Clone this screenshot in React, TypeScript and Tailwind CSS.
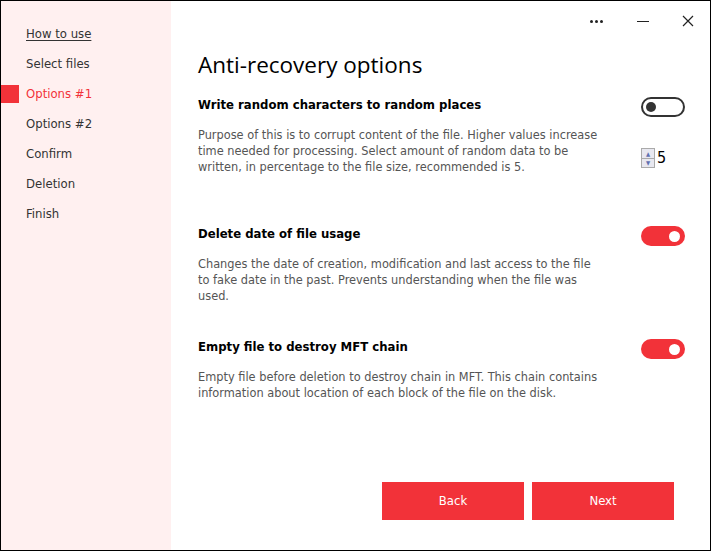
import { useState } from "react";

const navItems = ["How to use", "Select files", "Options #1", "Options #2", "Confirm", "Deletion", "Finish"];

function Toggle({ on }: { on: boolean }) {
  if (on) {
    return (
      <div className="flex h-[20px] w-[44px] items-center justify-end rounded-full bg-[#f23239] pr-[5px]">
        <div className="h-[11px] w-[11px] rounded-full bg-white" />
      </div>
    );
  }
  return (
    <div className="flex h-[20px] w-[44px] items-center rounded-full border-2 border-[#333] pl-[3px]">
      <div className="h-[10px] w-[10px] rounded-full bg-[#333]" />
    </div>
  );
}

function Option({
  title,
  text,
  on,
  extra,
  className,
}: {
  title: string;
  text: string;
  on: boolean;
  extra?: React.ReactNode;
  className?: string;
}) {
  return (
    <div className={`flex ${className ?? ""}`}>
      <div className="w-[405px]">
        <p className="text-[13px] font-bold leading-[16px] text-black">{title}</p>
        <p className="mt-[14px] text-[12.65px] leading-[16px] text-[#555]">{text}</p>
      </div>
      <div className="ml-[38px] flex flex-col">
        <Toggle on={on} />
        {extra}
      </div>
    </div>
  );
}

export default function App() {
  const [active] = useState(2);
  return (
    <div
      className="flex h-[551px] w-[711px] border border-black bg-white"
      style={{ fontFamily: "'DejaVu Sans Condensed', 'DejaVu Sans', sans-serif", fontStretch: "condensed" }}
    >
      <aside className="w-[170px] shrink-0 bg-[#fff0f0] pt-[18px]">
        {navItems.map((item, i) => (
          <div key={item} className="flex h-[30px] items-center">
            <div className={`h-[18px] w-[18px] ${i === active ? "bg-[#f23239]" : ""}`} />
            <span
              className={`ml-[7px] text-[13px] ${
                i === active ? "text-[#f23239]" : "text-[#333]"
              } ${i === 0 ? "underline underline-offset-2" : ""}`}
            >
              {item}
            </span>
          </div>
        ))}
      </aside>
      <main className="flex flex-1 flex-col">
        <div className="flex h-[40px] items-center justify-end pr-[16px] text-[#222]">
          <div className="flex gap-[2px]">
            <span className="h-[3px] w-[3px] rounded-full bg-[#222]" />
            <span className="h-[3px] w-[3px] rounded-full bg-[#222]" />
            <span className="h-[3px] w-[3px] rounded-full bg-[#222]" />
          </div>
          <span className="ml-[34px] block h-[1px] w-[12px] bg-[#222]" />
          <svg className="ml-[33px]" width="12" height="12" viewBox="0 0 12 12">
            <path d="M1 1 L11 11 M11 1 L1 11" stroke="#222" strokeWidth="1.2" />
          </svg>
        </div>
        <div className="pl-[27px]">
          <h1
            className="mt-[9px] text-[22.5px] leading-[30px] text-black"
            style={{ fontFamily: "'Open Sans', 'Noto Sans', sans-serif", fontStretch: "normal" }}
          >
            Anti-recovery options
          </h1>
          <div className="mt-[17px] flex flex-col">
            <Option
              title="Write random characters to random places"
              text="Purpose of this is to corrupt content of the file. Higher values increase time needed for processing. Select amount of random data to be written, in percentage to the file size, recommended is 5."
              on={false}
              extra={
                <div className="mt-[29px] flex items-center">
                  <div className="flex flex-col border border-[#aaa]">
                    <div className="flex h-[9px] w-[12px] items-center justify-center bg-[#e8e8f0] text-[6px] leading-none text-[#6070b0]">▲</div>
                    <div className="flex h-[9px] w-[12px] items-center justify-center border-t border-[#aaa] bg-[#e8e8f0] text-[6px] leading-none text-[#6070b0]">▼</div>
                  </div>
                  <span className="ml-[2px] text-[16px] text-black">5</span>
                </div>
              }
            />
            <Option
              className="mt-[51px]"
              title="Delete date of file usage"
              text="Changes the date of creation, modification and last access to the file to fake date in the past. Prevents understanding when the file was used."
              on={true}
            />
            <Option
              className="mt-[35px]"
              title="Empty file to destroy MFT chain"
              text="Empty file before deletion to destroy chain in MFT. This chain contains information about location of each block of the file on the disk."
              on={true}
            />
          </div>
        </div>
        <div className="mt-auto mb-[30px] flex justify-end gap-[8px] pr-[36px]">
          <button className="h-[38px] w-[142px] bg-[#f23239] text-[13px] text-white">Back</button>
          <button className="h-[38px] w-[142px] bg-[#f23239] text-[13px] text-white">Next</button>
        </div>
      </main>
    </div>
  );
}
